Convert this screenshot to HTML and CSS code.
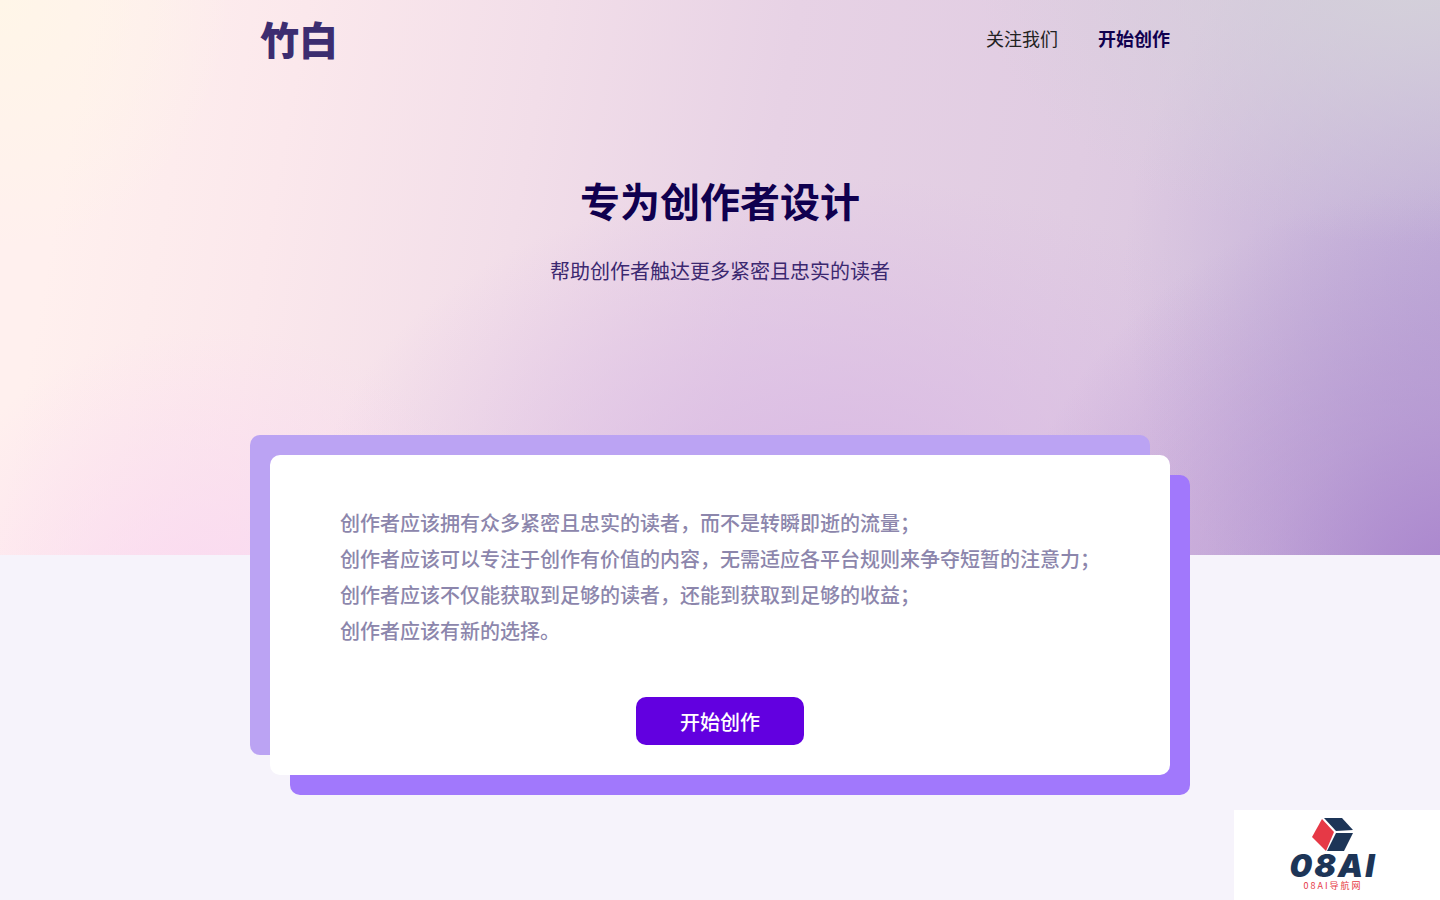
FILE: index.html
```html
<!DOCTYPE html>
<html lang="zh-CN">
<head>
  <meta charset="UTF-8" />
  <meta name="viewport" content="width=device-width, initial-scale=1.0" />
  <title>竹白 - 专为创作者设计</title>
  <link rel="stylesheet" href="styles.css">
</head>
<body>
  <div class="hero">
    <header class="header">
      <a class="logo" href="#">竹白</a>
      <nav class="nav">
        <a href="#">关注我们</a>
        <a class="nav-start" href="#">开始创作</a>
      </nav>
    </header>
    <h1>专为创作者设计</h1>
    <p class="subtitle">帮助创作者触达更多紧密且忠实的读者</p>
  </div>

  <main class="card">
    <div class="card-body">
      <p>
        创作者应该拥有众多紧密且忠实的读者，而不是转瞬即逝的流量；<br>
        创作者应该可以专注于创作有价值的内容，无需适应各平台规则来争夺短暂的注意力；<br>
        创作者应该不仅能获取到足够的读者，还能到获取到足够的收益；<br>
        创作者应该有新的选择。
      </p>
      <button type="button">开始创作</button>
    </div>
  </main>

  <a class="badge" href="#">
    <svg width="42" height="34" viewBox="0 0 42 34" aria-hidden="true">
      <path fill="#e63946" d="M10 1 22 14 14 33 0 19z" />
      <path fill="#1d3557" d="M12 0H30L41 12 24 13z" />
      <path fill="#1d3557" d="M24 15H41L32 33H15z" />
    </svg>
    <span class="badge-name">08AI</span>
    <span class="badge-text">08AI导航网</span>
  </a>
</body>
</html>
```

FILE: styles.css
```css
:root {
  --fondo: #f6f3fb;
  --dark: #10004f;
  --purple: #6200e0;
}

* {
  box-sizing: border-box;
}

body {
  font-family: 'Noto Sans CJK SC', sans-serif;
  background-color: var(--fondo);
  margin: 0;
}

a {
  color: inherit;
  text-decoration: none;
}

.hero {
  height: 555px;
  text-align: center;
  background:
    radial-gradient(ellipse 30% 48% at 98% -4%, #d4d1da 0%, #d4d1daaa 35%, #d4d1da00 100%),
    radial-gradient(ellipse 32% 75% at 102% 108%, #a680cc 0%, #a680cc77 45%, #a680cc00 100%),
    radial-gradient(ellipse 26% 75% at 104% 50%, #bfacd7 0%, #bfacd788 50%, #bfacd700 100%),
    radial-gradient(ellipse 36% 60% at 58% 92%, #d9b9e4 0%, #d9b9e400 100%),
    radial-gradient(ellipse 22% 55% at 15% 114%, #fad8f1 0%, #fad8f100 100%),
    radial-gradient(ellipse 16% 45% at 0% 0%, #fff6e8 0%, #fff6e800 100%),
    linear-gradient(100deg, #fff0ee 6%, #fbe8ec 20%, #f2dee9 36%, #e7d2e5 52%, #e0cce2 72%, #d3c0de 96%);
}

.header {
  display: flex;
  justify-content: space-between;
  align-items: center;
  max-width: 920px;
  height: 76px;
  margin: 0 auto;
  padding-right: 10px;
}

.logo {
  color: #3c2d70;
  font-size: 39px;
  font-weight: 900;
}

.nav {
  display: flex;
  gap: 40px;
  font-size: 18px;
  color: #222;
}

.nav-start {
  color: var(--dark);
  font-weight: bold;
}

h1 {
  margin: 94px 0 0;
  color: var(--dark);
  font-size: 40px;
  line-height: 60px;
}

.subtitle {
  margin: 26px 0 0;
  color: #3b2870;
  font-size: 20px;
  line-height: 30px;
}

.card {
  position: relative;
  max-width: 900px;
  margin: -100px auto 100px;
}

/* offset panels behind the white card */
.card::before,
.card::after {
  content: '';
  position: absolute;
  width: 100%;
  height: 100%;
  border-radius: 10px;
}

.card::before {
  top: 20px;
  left: 20px;
  background: #a178fc;
}

.card::after {
  top: -20px;
  left: -20px;
  background: #bba3f3;
}

.card-body {
  position: relative;
  z-index: 1;
  padding: 50px 70px 30px;
  background: #fff;
  border-radius: 10px;
}

.card p {
  margin: 0 0 48px;
  color: #8c86ac;
  font-size: 20px;
  font-weight: 500;
  line-height: 36px;
}

button {
  display: block;
  width: 168px;
  height: 48px;
  margin: 0 auto;
  border: none;
  border-radius: 10px;
  background: var(--purple);
  color: #fff;
  font-family: inherit;
  font-size: 20px;
  font-weight: 500;
  cursor: pointer;
}

.badge {
  position: fixed;
  right: 0;
  bottom: 0;
  z-index: 2;
  display: flex;
  flex-direction: column;
  align-items: center;
  width: 206px;
  height: 90px;
  padding: 8px 8px 0 0;
  background: #fff;
}

.badge-name {
  color: #1d3557;
  font-family: Inter, sans-serif;
  font-size: 32px;
  font-style: italic;
  font-weight: 900;
  letter-spacing: 2px;
  line-height: 28px;
}

.badge-text {
  color: #e63946;
  font-size: 9px;
  letter-spacing: 2px;
  line-height: 12px;
}
```
